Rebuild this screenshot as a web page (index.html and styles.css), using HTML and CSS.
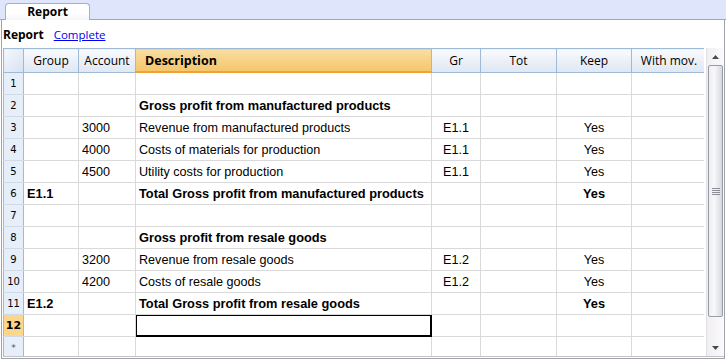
FILE: index.html
```html
<!DOCTYPE html>
<html lang="en">
  <head>
    <meta charset="UTF-8" />
    <title>Report</title>
    <link rel="stylesheet" href="styles.css">
  </head>
  <body>
    <div class="tabbar">
      <div class="tab">Report</div>
    </div>
    <div class="panel">
      <div class="titlebar">
        <span class="title">Report</span>
        <a href="#" class="link">Complete</a>
      </div>
      <div class="grid">
        <div class="table-wrap">
          <table class="sheet">
            <colgroup>
              <col style="width:20px">
              <col style="width:55px">
              <col style="width:57px">
              <col style="width:296px">
              <col style="width:49px">
              <col style="width:76px">
              <col style="width:75px">
              <col style="width:75px">
            </colgroup>
            <thead>
              <tr>
                <th class="corner"></th>
                <th>Group</th>
                <th>Account</th>
                <th class="active-col">Description</th>
                <th>Gr</th>
                <th>Tot</th>
                <th>Keep</th>
                <th>With mov.</th>
              </tr>
            </thead>
            <tbody>
              <tr><td class="num">1</td><td></td><td></td><td></td><td></td><td></td><td></td><td></td></tr>
              <tr><td class="num">2</td><td></td><td></td><td class="bold">Gross profit from manufactured products</td><td></td><td></td><td></td><td></td></tr>
              <tr><td class="num">3</td><td></td><td>3000</td><td>Revenue from manufactured products</td><td class="center">E1.1</td><td></td><td class="center">Yes</td><td></td></tr>
              <tr><td class="num">4</td><td></td><td>4000</td><td>Costs of materials for production</td><td class="center">E1.1</td><td></td><td class="center">Yes</td><td></td></tr>
              <tr><td class="num">5</td><td></td><td>4500</td><td>Utility costs for production</td><td class="center">E1.1</td><td></td><td class="center">Yes</td><td></td></tr>
              <tr><td class="num">6</td><td class="bold">E1.1</td><td></td><td class="bold">Total Gross profit from manufactured products</td><td></td><td></td><td class="center bold">Yes</td><td></td></tr>
              <tr><td class="num">7</td><td></td><td></td><td></td><td></td><td></td><td></td><td></td></tr>
              <tr><td class="num">8</td><td></td><td></td><td class="bold">Gross profit from resale goods</td><td></td><td></td><td></td><td></td></tr>
              <tr><td class="num">9</td><td></td><td>3200</td><td>Revenue from resale goods</td><td class="center">E1.2</td><td></td><td class="center">Yes</td><td></td></tr>
              <tr><td class="num">10</td><td></td><td>4200</td><td>Costs of resale goods</td><td class="center">E1.2</td><td></td><td class="center">Yes</td><td></td></tr>
              <tr><td class="num">11</td><td class="bold">E1.2</td><td></td><td class="bold">Total Gross profit from resale goods</td><td></td><td></td><td class="center bold">Yes</td><td></td></tr>
              <tr><td class="num current">12</td><td></td><td></td><td class="selected"></td><td></td><td></td><td></td><td></td></tr>
              <tr><td class="num star">*</td><td></td><td></td><td></td><td></td><td></td><td></td><td></td></tr>
            </tbody>
          </table>
        </div>
        <div class="scrollbar">
          <div class="sb-btn">
            <svg width="7" height="4" viewBox="0 0 7 4"><path d="M0 4 L3.5 0 L7 4 Z" fill="#4a4a4a"/></svg>
          </div>
          <div class="sb-track">
            <div class="sb-thumb">
              <svg width="8" height="7" viewBox="0 0 8 7"><path d="M0 0.5 H8 M0 2.5 H8 M0 4.5 H8 M0 6.5 H8" stroke="#8a8e96" stroke-width="1"/></svg>
            </div>
          </div>
          <div class="sb-btn">
            <svg width="7" height="4" viewBox="0 0 7 4"><path d="M0 0 L3.5 4 L7 0 Z" fill="#4a4a4a"/></svg>
          </div>
        </div>
      </div>
    </div>
  </body>
</html>
```

FILE: styles.css
```css
body {
  margin: 0;
  padding: 0;
  font-family: "Open Sans", "DejaVu Sans", sans-serif;
  font-size: 12px;
  color: #000;
  background-color: #fff;
  width: 726px;
  height: 359px;
  overflow: hidden;
}
.tabbar {
  height: 19px;
  background-color: #dfe6fb;
  border-bottom: 1px solid #a3a7b0;
  display: flex;
  align-items: flex-end;
  padding-left: 5px;
  box-sizing: content-box;
}
.tab {
  width: 85px;
  height: 17px;
  margin-bottom: -1px;
  border: 1px solid #a8b0c0;
  border-bottom: none;
  border-radius: 4px 4px 0 0;
  background: linear-gradient(#ffffff, #ffffff 60%, #f4f5f8);
  font-weight: bold;
  font-size: 12px;
  line-height: 16px;
  text-align: center;
  box-sizing: border-box;
}
.panel {
  height: 339px;
  border-left: 1px solid #9ea3ac;
  border-right: 1px solid #9ea3ac;
  border-bottom: 1px solid #9ea3ac;
  margin: 0 1px 0 1px;
  box-sizing: border-box;
  padding-left: 1px;
}
.titlebar {
  height: 28px;
  display: flex;
  align-items: center;
  gap: 10px;
}
.title {
  font-weight: bold;
  font-size: 12px;
}
.link {
  color: #0000ee;
  text-decoration: underline;
  font-size: 11.5px;
}
.grid {
  display: flex;
  height: 309px;
  border-bottom: 1px solid #c4c4c4;
  box-sizing: border-box;
}
.table-wrap {
  width: 703px;
  overflow: hidden;
}
.sheet {
  border-collapse: collapse;
  table-layout: fixed;
  width: 703px;
  font-family: "Liberation Sans", Arial, sans-serif;
  font-size: 12.6px;
}
.sheet th {
  height: 22px;
  padding: 0;
  border: 1px solid #9fbad6;
  background: linear-gradient(#f8fafd, #dfe7f3);
  font-family: "Open Sans", "DejaVu Sans", sans-serif;
  font-weight: normal;
  font-size: 12px;
  text-align: center;
  white-space: nowrap;
  overflow: hidden;
}
.sheet th.corner {
  background: linear-gradient(135deg, #f5f8fd, #d6e1f1);
}
.sheet th.active-col {
  background: linear-gradient(#f9dea3, #f5c56a);
  border-bottom: 2px solid #f2a235;
  font-weight: bold;
  font-size: 12.5px;
  text-align: left;
  padding-left: 9px;
}
.sheet td {
  height: 21px;
  padding: 0 3px;
  border: 1px solid #d9d9d9;
  white-space: nowrap;
  overflow: hidden;
}
.sheet td.num {
  background-color: #e6eef9;
  border-right: 1px solid #9fbad6;
  border-left: 1px solid #9fbad6;
  border-bottom-color: #d0dae6;
  text-align: center;
  font-family: "DejaVu Sans", sans-serif;
  font-size: 10px;
  padding: 0;
}
.sheet td.num.current {
  background-color: #fcd68c;
  font-weight: bold;
  font-size: 11px;
}
.sheet td.num.star {
  color: #555;
  font-size: 9px;
}
.sheet td.bold {
  font-weight: bold;
  font-size: 12.8px;
}
.sheet td.center {
  text-align: center;
}
.sheet td.selected {
  box-shadow: inset 0 0 0 1px #000;
  outline: 1px solid #000;
  outline-offset: -1px;
}
.scrollbar {
  width: 17px;
  margin-left: 2px;
  display: flex;
  flex-direction: column;
  background: linear-gradient(90deg, #f0eef2, #fbfafc);
  border-left: 1px solid #e0e0e4;
}
.sb-btn {
  height: 17px;
  display: flex;
  align-items: center;
  justify-content: center;
}
.sb-track {
  flex: 1;
  position: relative;
}
.sb-thumb {
  position: absolute;
  top: 0;
  left: 1px;
  right: 1px;
  height: 252px;
  border: 1px solid #999ca4;
  border-radius: 2px;
  background: linear-gradient(90deg, #eceef2, #f8f8fa 40%, #d6d8de);
  display: flex;
  align-items: center;
  justify-content: center;
  box-sizing: border-box;
}
```
